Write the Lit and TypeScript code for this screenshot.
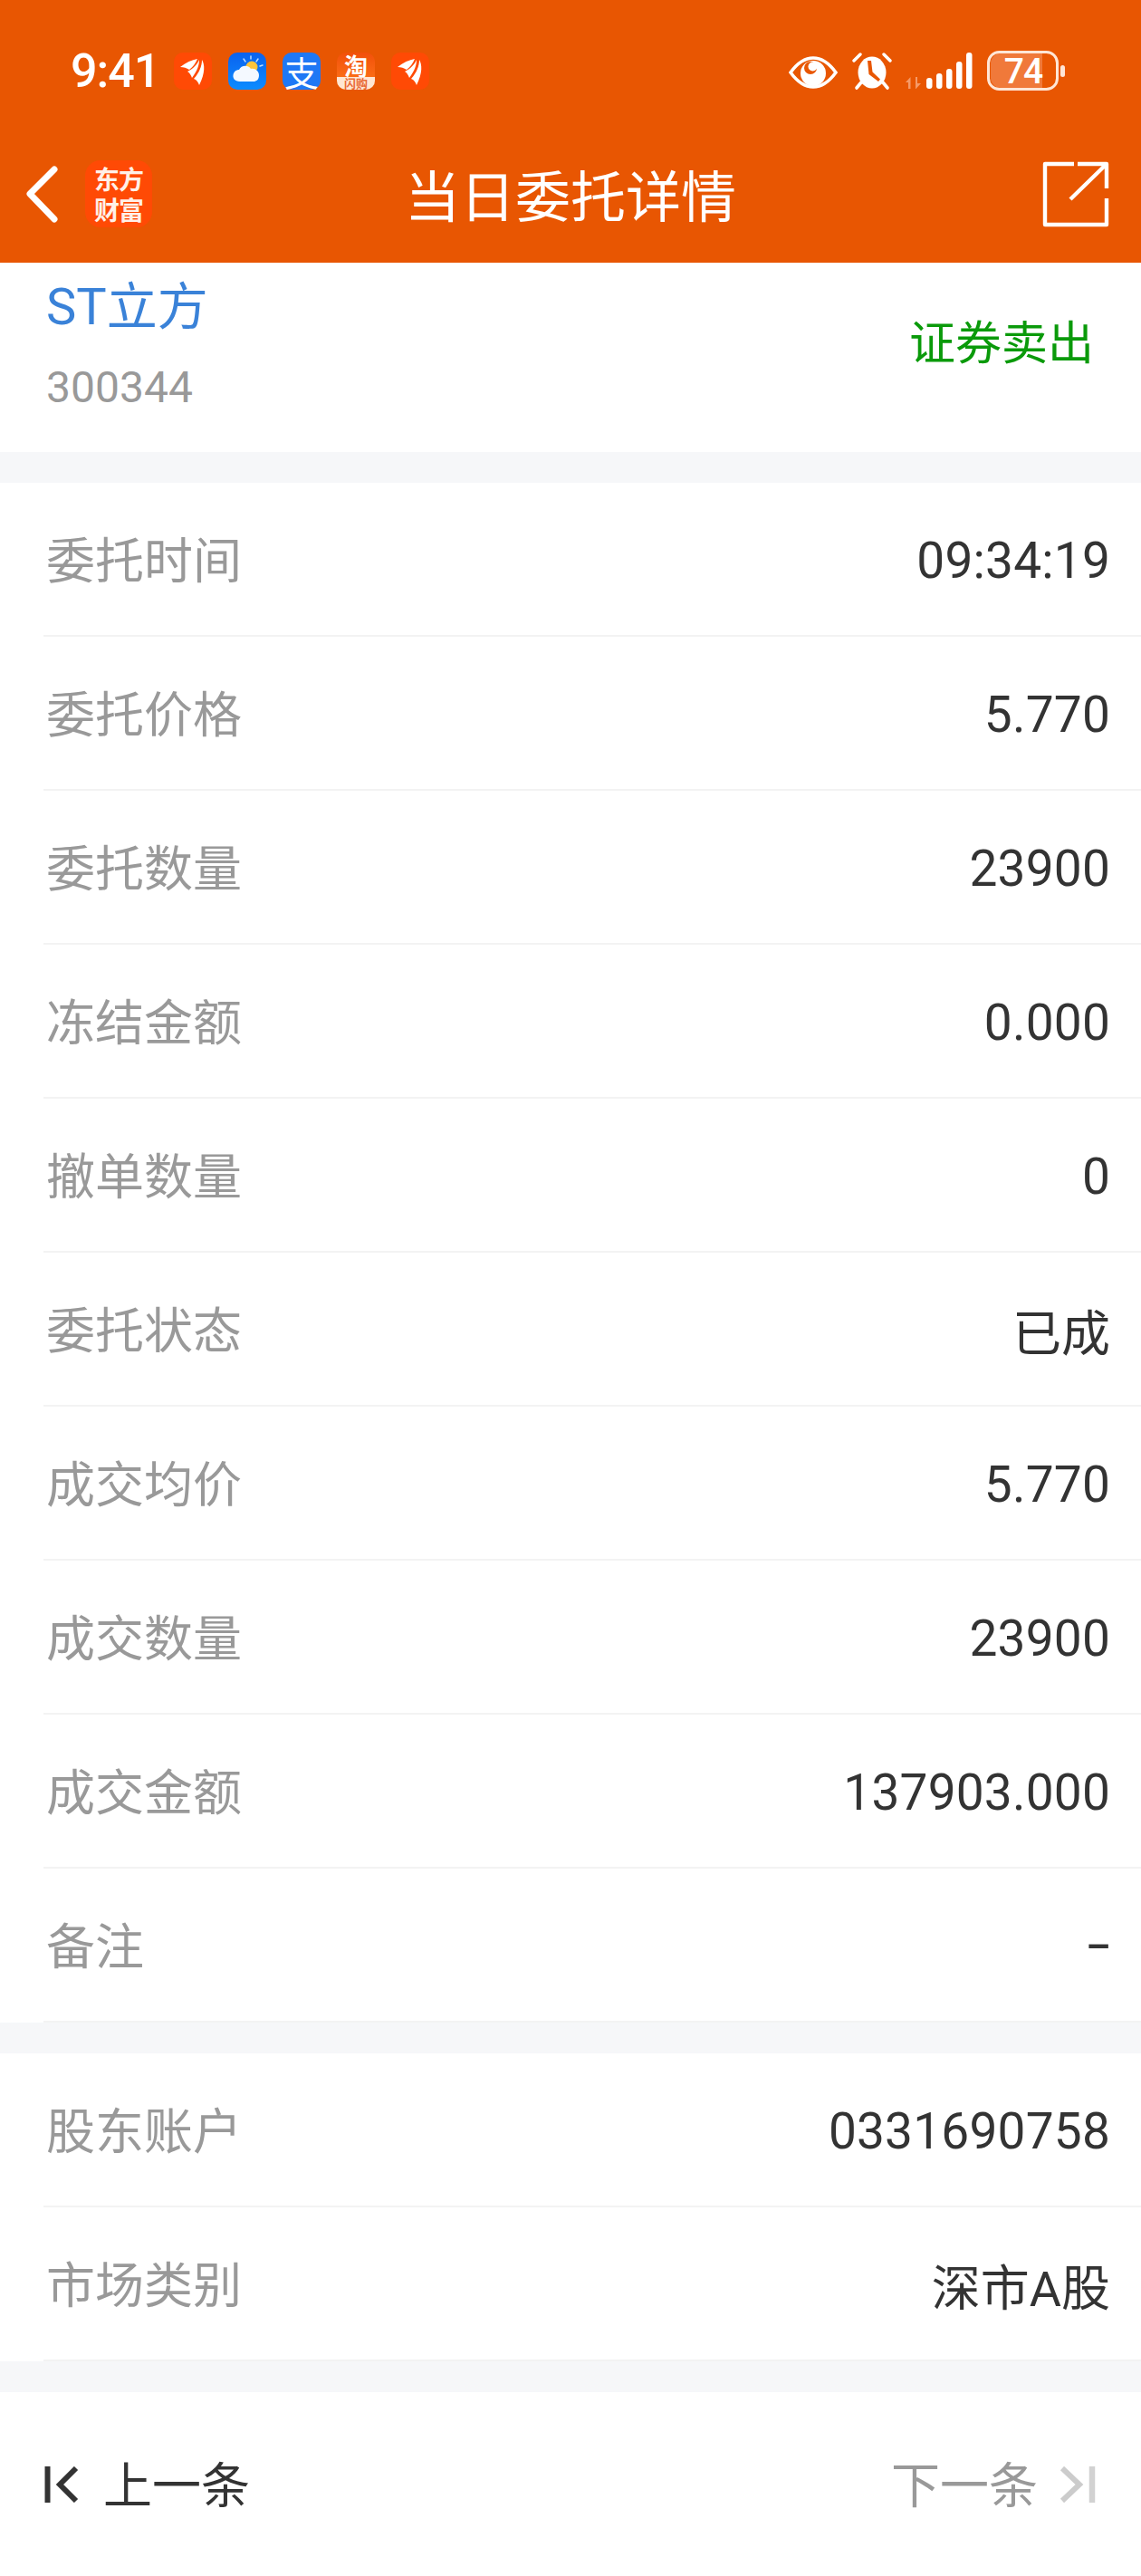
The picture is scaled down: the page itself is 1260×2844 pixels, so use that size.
import { LitElement, html, css, svg } from "lit";
import { customElement } from "lit/decorators.js";

const wing = svg`<svg viewBox="0 0 42 41" class="svgfill">
  <path fill="#fff" d="M7 16 C13 11 20 8 26 7 C24 12 21 16 17 19 C14 17 11 16 7 16Z"/>
  <path fill="#fff" d="M28 8 C28 14 26 20 20 28 C19 25 17 22 15 21 C21 18 26 13 28 8Z"/>
  <path fill="#fff" d="M31 8 C34 13 35 22 28 36 C27 33 25 30 22 29 C28 22 31 15 31 8Z"/>
</svg>`;

const group1 = [
  ["委托时间", "09:34:19"],
  ["委托价格", "5.770"],
  ["委托数量", "23900"],
  ["冻结金额", "0.000"],
  ["撤单数量", "0"],
  ["委托状态", "已成"],
  ["成交均价", "5.770"],
  ["成交数量", "23900"],
  ["成交金额", "137903.000"],
  ["备注", "-"],
];
const group2 = [
  ["股东账户", "0331690758"],
  ["市场类别", "深市A股"],
];

@customElement("app-root")
export class AppRoot extends LitElement {
  static styles = css`
    :host {
      display: block;
      width: 1260px;
      height: 2844px;
      overflow: hidden;
      background: #fff;
      font-family: Roboto, "Noto Sans CJK SC", sans-serif;
      color: #333;
    }
    .header { height: 290px; background: #e85602; display: flex; flex-direction: column; color: #fff; }
    .status { height: 150px; display: flex; align-items: flex-start; box-sizing: border-box; padding: 56px 0 0 78px; }
    .time { font-size: 52px; line-height: 44px; width: 114px; font-weight: 500; letter-spacing: -1px; margin-top: 1px; }
    .notes { display: flex; gap: 18px; margin-top: 2px; }
    .note { width: 42px; height: 41px; border-radius: 10px; position: relative; flex: none; }
    .svgfill { display: block; width: 100%; height: 100%; }
    .east { background: #ff4a05; }
    .weather { background: linear-gradient(#0a62ee, #0d8cff); }
    .ali { background: #1f78f5; color: #fff; font-size: 38px; line-height: 41px; text-align: center; font-family: "Noto Sans CJK SC", sans-serif; }
    .tao { background: linear-gradient(#f2500a, #ff7a1c); display: flex; flex-direction: column; font-family: "Noto Sans CJK SC", sans-serif; align-items: center; }
    .tao b { font-size: 26px; line-height: 27px; height: 27px; font-weight: 700; color: #fff; }
    .tao i { font-style: normal; align-self: stretch; background: #ffe6d2; color: #e96a36; font-size: 13px; line-height: 14px; height: 14px; text-align: center; font-weight: 700; border-radius: 0 0 10px 10px; }
    .right { margin-left: auto; display: flex; align-items: flex-start; margin-right: 83px; }
    .right svg { display: block; flex: none; }
    .eye { margin-top: 4px; }
    .alarm { margin: 2px 0 0 15px; }
    .signal { margin: 2px 0 0 14px; }
    .bat { margin-left: 15px; overflow: visible; }
    .nav { flex: 1; display: flex; align-items: center; position: relative; padding-bottom: 12px; box-sizing: border-box; }
    .back { width: 44px; height: 70px; margin-left: 26px; flex: none; }
    .logo { margin-left: 24px; width: 74px; height: 74px; box-sizing: border-box; padding: 3px 9px 0; border-radius: 17px; background: #ff4a05; flex: none;
      font: 700 28px/34px "Noto Sans CJK SC", sans-serif; text-align: center; color: #fff0e8; letter-spacing: -1px; }
    .title { position: absolute; left: 0; right: 0; text-align: center; font: 400 61px/70px "Noto Sans CJK SC", sans-serif; top: 29px; }
    .share { margin-left: auto; margin-right: 35px; width: 74px; height: 74px; flex: none; }

    .stock { height: 209px; box-sizing: border-box; padding: 21px 52px 44px 51px; display: flex; justify-content: space-between; align-items: center; }
    .name { font-size: 56px; line-height: 56px; color: #3a82d8; }
    .code { font-size: 48px; line-height: 56px; color: #999; margin-top: 33px; }
    .side { font-size: 51px; color: #0a9a0a; line-height: 60px; margin-bottom: 6px; }
    .gap { height: 34px; background: #f6f7f9; }
    .row { height: 170px; box-sizing: border-box; margin-left: 48px; padding: 0 34px 0 3px; border-bottom: 2px solid #f3f3f3; display: flex; justify-content: space-between; align-items: center; font-size: 54px; }
    .label { color: #999; margin-bottom: 3px; }
    .value { margin-top: 3px; }
    .num { font-size: 55px; letter-spacing: 0.2px; }
    .dash { margin-top: 0; font-size: 60px; line-height: 60px; transform: scaleX(1.5); transform-origin: right center; }
    .foot { height: 203px; display: flex; justify-content: space-between; align-items: flex-start; padding: 73px 50px 0 48px; box-sizing: border-box; font-size: 54px; line-height: 64px; }
    .foot div { display: flex; align-items: center; }
    .prev { gap: 26px; }
    .foot .next { color: #999; gap: 24px; }
    .foot svg { width: 40px; height: 40px; display: block; flex: none; margin-bottom: 6px; }
  `;

  private row(r: string[]) {
    const v = r[1];
    const cls = v === "-" ? "value dash" : /^[\d.:]+$/.test(v) ? "value num" : "value";
    return html`<div class="row"><span class="label">${r[0]}</span><span class=${cls}>${v}</span></div>`;
  }

  render() {
    return html`
      <div class="header">
        <div class="status">
          <div class="time">9:41</div>
          <div class="notes">
            <div class="note east">${wing}</div>
            <div class="note weather">
              <svg viewBox="0 0 42 41" class="svgfill">
                <g stroke="#bcdcff" stroke-width="1.5" stroke-linecap="round"><path d="M17 7l2 3M25 4v3M33 7l-2 3M38 14l-3 1"/></g>
                <circle cx="26" cy="16" r="6.5" fill="#ffc53a"/>
                <path fill="#f4f9ff" d="M13 32 C7 32 5 28 5.5 25 C6 21 9 19 12 19 C14 14 22 13 25 18 C30 17 34 21 34 25 C34 30 31 32 28 32Z"/>
              </svg>
            </div>
            <div class="note ali">支</div>
            <div class="note tao"><b>淘</b><i>闪购</i></div>
            <div class="note east">${wing}</div>
          </div>
          <div class="right">
            <svg class="eye" width="54" height="40" viewBox="0 0 54 40">
              <path d="M2 20 C10 9 18 4 27 4 C36 4 44 9 52 20 C44 31 36 36 27 36 C18 36 10 31 2 20Z" fill="none" stroke="#fff" stroke-width="3.6"/>
              <circle cx="27" cy="21" r="14" fill="#fff"/>
              <circle cx="24" cy="15" r="7" fill="#e85602"/>
              <circle cx="26.5" cy="13.5" r="5" fill="#fff"/>
            </svg>
            <svg class="alarm" width="46" height="42" viewBox="0 0 46 42">
              <path d="M3 9 L10 2 M43 9 L36 2" stroke="#fff" stroke-width="3.4" stroke-linecap="round"/>
              <path d="M11 33 L6 39 M35 33 L40 39" stroke="#fff" stroke-width="3.6" stroke-linecap="round"/>
              <ellipse cx="23" cy="22" rx="15.5" ry="17.5" fill="#fff"/>
              <path d="M18 9 H22 L23.5 21.5 L32 29.5 L30 32 L19.5 24Z" fill="#e85602"/>
            </svg>
            <svg class="signal" width="75" height="42" viewBox="0 0 75 42">
              <path fill="#f59a68" d="M3 40V33H0L5.5 27V40ZM11 27H13V34H17L11.5 40H11Z" />
              <g fill="#fff">
                <rect x="23" y="28" width="6.5" height="12" rx="3"/>
                <rect x="34" y="23" width="6.5" height="17" rx="3"/>
                <rect x="45" y="18" width="6.5" height="22" rx="3"/>
                <rect x="56" y="10" width="6.5" height="30" rx="3"/>
                <rect x="67" y="0" width="6.5" height="40" rx="3"/>
              </g>
            </svg>
            <svg class="bat" width="87" height="44" viewBox="0 0 87 44">
              <path d="M4 14a11 11 0 0 1 11-11h46v38h-46a11 11 0 0 1-11-11Z" fill="#f0793a"/>
              <rect x="1.5" y="1.5" width="76" height="41" rx="12" fill="none" stroke="#ffe6d6" stroke-width="3"/>
              <rect x="81" y="16" width="5" height="13" rx="2.5" fill="#ffe6d6"/>
              <text x="40" y="36" text-anchor="middle" fill="#fff" font-family="Roboto, sans-serif" font-size="39" font-weight="500" letter-spacing="-1">74</text>
            </svg>
          </div>
        </div>
        <div class="nav">
          <svg class="back" viewBox="0 0 44 70">
            <path d="M34 8 L7 35 L34 63" fill="none" stroke="#fff" stroke-width="7" stroke-linecap="round" stroke-linejoin="round"/>
          </svg>
          <div class="logo">东方财富</div>
          <div class="title">当日委托详情</div>
          <svg class="share" viewBox="0 0 74 74">
            <path d="M35 4 H3 V71 H71 V42 M39 4 H71 V31 M31 43 L70 5" fill="none" stroke="#fff" stroke-width="4.4" stroke-linejoin="round"/>
          </svg>
        </div>
      </div>
      <div class="stock">
        <div><div class="name">ST立方</div><div class="code">300344</div></div>
        <div class="side">证券卖出</div>
      </div>
      <div class="gap"></div>
      ${group1.map((r) => this.row(r))}
      <div class="gap"></div>
      ${group2.map((r) => this.row(r))}
      <div class="gap"></div>
      <div class="foot">
        <div class="prev">
          <svg viewBox="0 0 40 40"><path d="M4.5 0V40" stroke="#333" stroke-width="6" fill="none"/><path d="M36 2 L18 20 L36 38" stroke="#333" stroke-width="6" fill="none"/></svg>
          <span>上一条</span>
        </div>
        <div class="next">
          <span>下一条</span>
          <svg viewBox="0 0 40 40"><path d="M3 2 L22 20 L3 38" stroke="#ccc" stroke-width="6" fill="none"/><path d="M36 0V40" stroke="#d2d2d2" stroke-width="6.5" fill="none"/></svg>
        </div>
      </div>
    `;
  }
}
